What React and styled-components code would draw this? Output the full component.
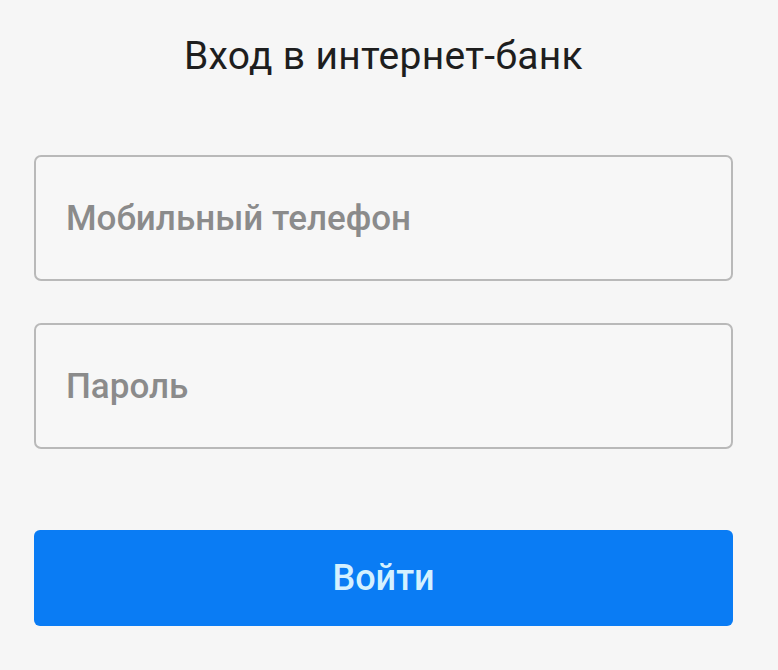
import React from 'react';
import styled, { createGlobalStyle } from 'styled-components';

const GlobalStyle = createGlobalStyle`
  html, body {
    margin: 0;
    padding: 0;
    background: #f6f6f6;
  }
  body {
    font-family: Roboto, "Noto Sans", sans-serif;
  }
`;

const LoginWrapper = styled.div`
  width: 778px;
  height: 670px;
  box-sizing: border-box;
  padding: 28px 45px 0 34px;
  display: flex;
  flex-direction: column;
`;

const Title = styled.h1`
  margin: 0 0 71px;
  text-align: center;
  font-size: 39px;
  font-weight: 400;
  line-height: 56px;
  color: #1e1e1e;
  letter-spacing: 0.3px;
`;

const Fields = styled.div`
  display: flex;
  flex-direction: column;
  gap: 42px;
`;

const Field = styled.input`
  box-sizing: border-box;
  width: 100%;
  height: 126px;
  padding: 0 30px;
  border: 2px solid #b9b9b9;
  border-radius: 7px;
  background: #f7f7f7;
  font-family: inherit;
  font-size: 35px;
  font-weight: 500;
  color: #333333;
  outline: none;

  &::placeholder {
    color: #8b8b8b;
  }
`;

const SubmitButton = styled.button`
  margin-top: 81px;
  width: 100%;
  height: 96px;
  border: none;
  border-radius: 6px;
  background: #0a7cf4;
  color: #d4f1ff;
  font-family: inherit;
  font-size: 36px;
  font-weight: 500;
  cursor: pointer;
`;

function App() {
  return (
    <LoginWrapper>
      <GlobalStyle />
      <Title>Вход в интернет-банк</Title>
      <Fields>
        <Field type="tel" placeholder="Мобильный телефон" />
        <Field type="password" placeholder="Пароль" />
      </Fields>
      <SubmitButton>Войти</SubmitButton>
    </LoginWrapper>
  );
}

export default App;
